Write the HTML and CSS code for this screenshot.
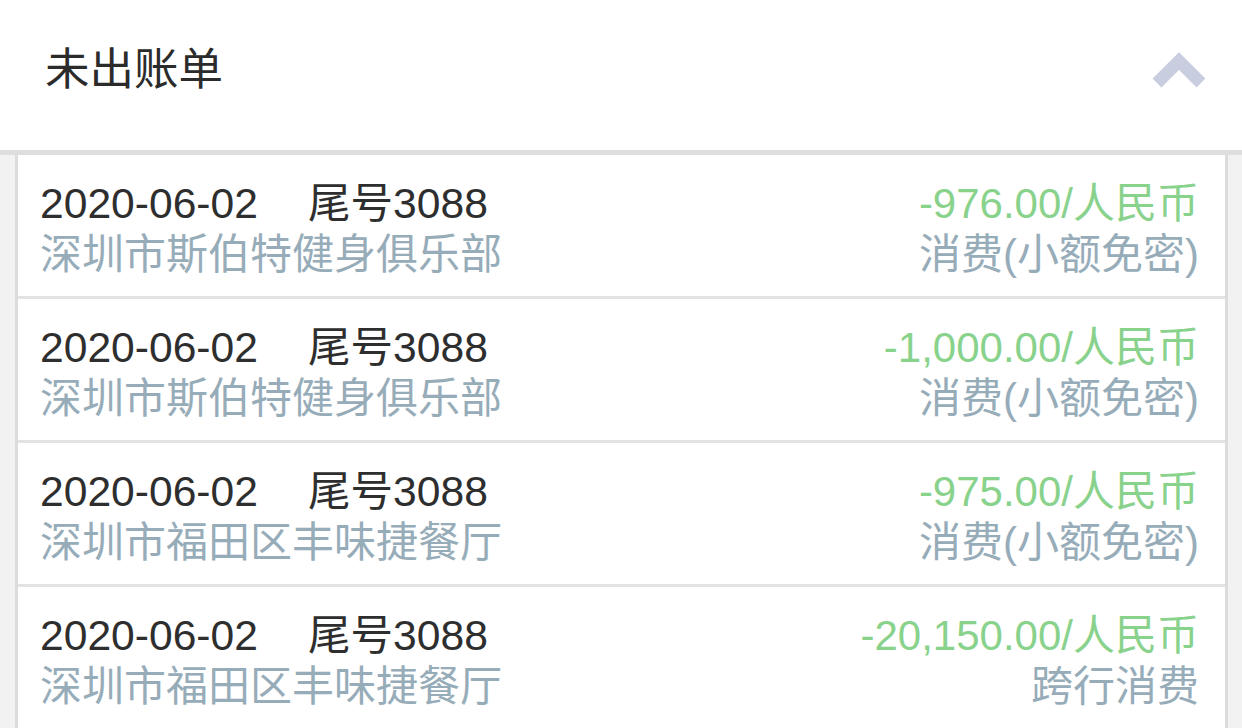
FILE: index.html
```html
<!DOCTYPE html>
<html lang="zh-CN">
<head>
<meta charset="utf-8">
<title>未出账单</title>
<link rel="stylesheet" href="styles.css">
</head>
<body>
<header class="head">
  <h1 class="title">未出账单</h1>
  <svg class="chevron" width="56" height="38" viewBox="0 0 56 38" aria-hidden="true">
    <polyline points="6,32 28,10 50,32" fill="none" stroke="#c9cde0" stroke-width="12.5" stroke-linejoin="miter"/>
  </svg>
</header>
<main class="list">
  <div class="row">
    <div class="left">
      <div class="line1"><span>2020-06-02</span><span class="card">尾号3088</span></div>
      <div class="merchant">深圳市斯伯特健身俱乐部</div>
    </div>
    <div class="right">
      <div class="amount">-976.00/人民币</div>
      <div class="type">消费(小额免密)</div>
    </div>
  </div>
  <div class="row">
    <div class="left">
      <div class="line1"><span>2020-06-02</span><span class="card">尾号3088</span></div>
      <div class="merchant">深圳市斯伯特健身俱乐部</div>
    </div>
    <div class="right">
      <div class="amount">-1,000.00/人民币</div>
      <div class="type">消费(小额免密)</div>
    </div>
  </div>
  <div class="row">
    <div class="left">
      <div class="line1"><span>2020-06-02</span><span class="card">尾号3088</span></div>
      <div class="merchant">深圳市福田区丰味捷餐厅</div>
    </div>
    <div class="right">
      <div class="amount">-975.00/人民币</div>
      <div class="type">消费(小额免密)</div>
    </div>
  </div>
  <div class="row">
    <div class="left">
      <div class="line1"><span>2020-06-02</span><span class="card">尾号3088</span></div>
      <div class="merchant">深圳市福田区丰味捷餐厅</div>
    </div>
    <div class="right">
      <div class="amount">-20,150.00/人民币</div>
      <div class="type">跨行消费</div>
    </div>
  </div>
</main>
</body>
</html>
```

FILE: styles.css
```css
* { box-sizing: border-box; }
html, body {
  margin: 0;
  padding: 0;
}
body {
  background: #f2f2f2;
  font-family: "Liberation Sans", "Noto Sans CJK SC", sans-serif;
  width: 1242px;
  height: 728px;
  overflow: hidden;
}
.head {
  height: 155px;
  background: #fff;
  border-bottom: 5px solid #dedede;
  display: flex;
  align-items: center;
  justify-content: space-between;
  padding: 0 35px 10px 45px;
}
.title {
  margin: 0;
  font-weight: normal;
  font-size: 44.5px;
  color: #2b2b2b;
  line-height: 1;
}
.chevron {
  display: block;
  margin-top: 0;
}
.list {
  margin: 0 14px 0 15px;
  background: #fff;
  border-left: 3px solid #dcdcdc;
  border-right: 3px solid #dcdcdc;
}
.row {
  height: 144px;
  border-bottom: 3px solid #e3e3e3;
  display: flex;
  justify-content: space-between;
  padding: 23px 26px 0 22px;
  font-size: 42px;
  line-height: 51px;
}
.line1 {
  color: #2e2e2e;
  white-space: nowrap;
  font-size: 42.6px;
}
.card {
  margin-left: 50px;
}
.merchant {
  color: #97acb9;
  white-space: nowrap;
}
.right {
  text-align: right;
}
.amount {
  color: #88d28c;
  white-space: nowrap;
}
.type {
  color: #97acb9;
  white-space: nowrap;
}
```
